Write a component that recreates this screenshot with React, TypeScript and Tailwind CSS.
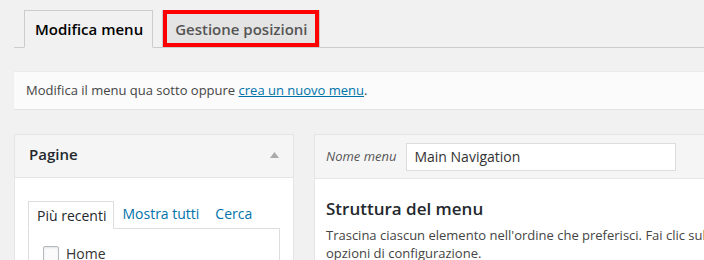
export default function App() {
  return (
    <div className="w-[704px] h-[260px] overflow-hidden bg-[#f1f1f1] pl-[14px] font-['Open_Sans',sans-serif] text-[#444]">
      {/* nav tabs */}
      <div className="flex items-end gap-[9px] border-b border-[#ccc] pl-[10px] pt-[10px]">
        <div className="-mb-px flex h-[38px] items-center border border-[#ccc] border-b-[#f1f1f1] bg-[#f1f1f1] pl-[10px] pr-[9px] text-[15px] font-semibold text-[#000]">
          Modifica menu
        </div>
        <div className="relative -mb-px flex h-[38px] items-center border border-[#ccc] bg-[#e4e4e4] pl-[12px] pr-[11px] text-[15px] font-semibold text-[#555]">
          Gestione posizioni
          <span className="absolute left-0 right-0 top-[-1px] bottom-0 border-[4px] border-[#ff0000]"></span>
        </div>
      </div>

      {/* notice */}
      <div className="mt-[23px] flex h-[39px] items-center border-t border-b border-t-[#ebebeb] border-b-[#e2e2e2] bg-[#fbfbfb] pl-[12px] text-[13px] text-[#444]">
        <p>
          Modifica il menu qua sotto oppure{" "}
          <a className="text-[#0073aa] underline">crea un nuovo menu</a>.
        </p>
      </div>

      {/* columns */}
      <div className="mt-[24px] flex gap-[20px]">
        <div className="w-[280px] shrink-0 border border-[#e5e5e5] bg-white">
          <div className="flex h-[43px] items-center justify-between border-b border-[#e5e5e5] bg-[#f5f5f5] pl-[14px] pr-[14px]">
            <span className="mb-[3px] text-[15px] font-semibold text-[#23282d]">Pagine</span>
            <svg width="9" height="6" viewBox="0 0 9 6" className="mb-[3px]">
              <polygon points="4.5,0 9,6 0,6" fill="#aaa" />
            </svg>
          </div>
          <div className="pl-[13px] pr-[13px] pt-[23px]">
            <div className="flex items-end text-[14px]">
              <div className="-mb-px flex h-[28px] items-center border border-[#ddd] border-b-white bg-white pl-[8px] pr-[7px] text-[#23282d]">
                Più recenti
              </div>
              <span className="ml-[8px] pb-[4px] text-[#0073aa]">Mostra tutti</span>
              <span className="ml-[16px] pb-[4px] text-[#0073aa]">Cerca</span>
            </div>
            <div className="h-[60px] border border-[#ddd] px-[14px] pt-[14px]">
              <label className="flex items-center gap-[7px] text-[14px] text-[#333]">
                <span className="h-[16px] w-[16px] rounded-[2px] border border-[#b4b9be] bg-[#fbfbfb] shadow-[inset_0_1px_2px_rgba(0,0,0,0.1)]"></span>
                Home
              </label>
            </div>
          </div>
        </div>

        <div className="w-[520px] shrink-0 border border-[#e5e5e5] bg-white">
          <div className="flex h-[44px] items-center border-b border-[#e5e5e5] bg-[#f5f5f5] pl-[11px]">
            <span className="text-[13px] italic text-[#555]">Nome menu</span>
            <div className="ml-[10px] flex h-[28px] w-[270px] items-center border border-[#ddd] bg-white pl-[7px] text-[14px] text-[#333]">
              Main Navigation
            </div>
          </div>
          <div className="pl-[11px] pt-[17px]">
            <h3 className="text-[17px] font-semibold text-[#23282d]">Struttura del menu</h3>
            <p className="mt-[4px] whitespace-nowrap text-[13px] leading-[18px] text-[#444]">
              Trascina ciascun elemento nell'ordine che preferisci. Fai clic sulla freccia a destra dell'elemento per visualizzare ulteriori
              <br />
              opzioni di configurazione.
            </p>
          </div>
        </div>
      </div>
    </div>
  );
}
